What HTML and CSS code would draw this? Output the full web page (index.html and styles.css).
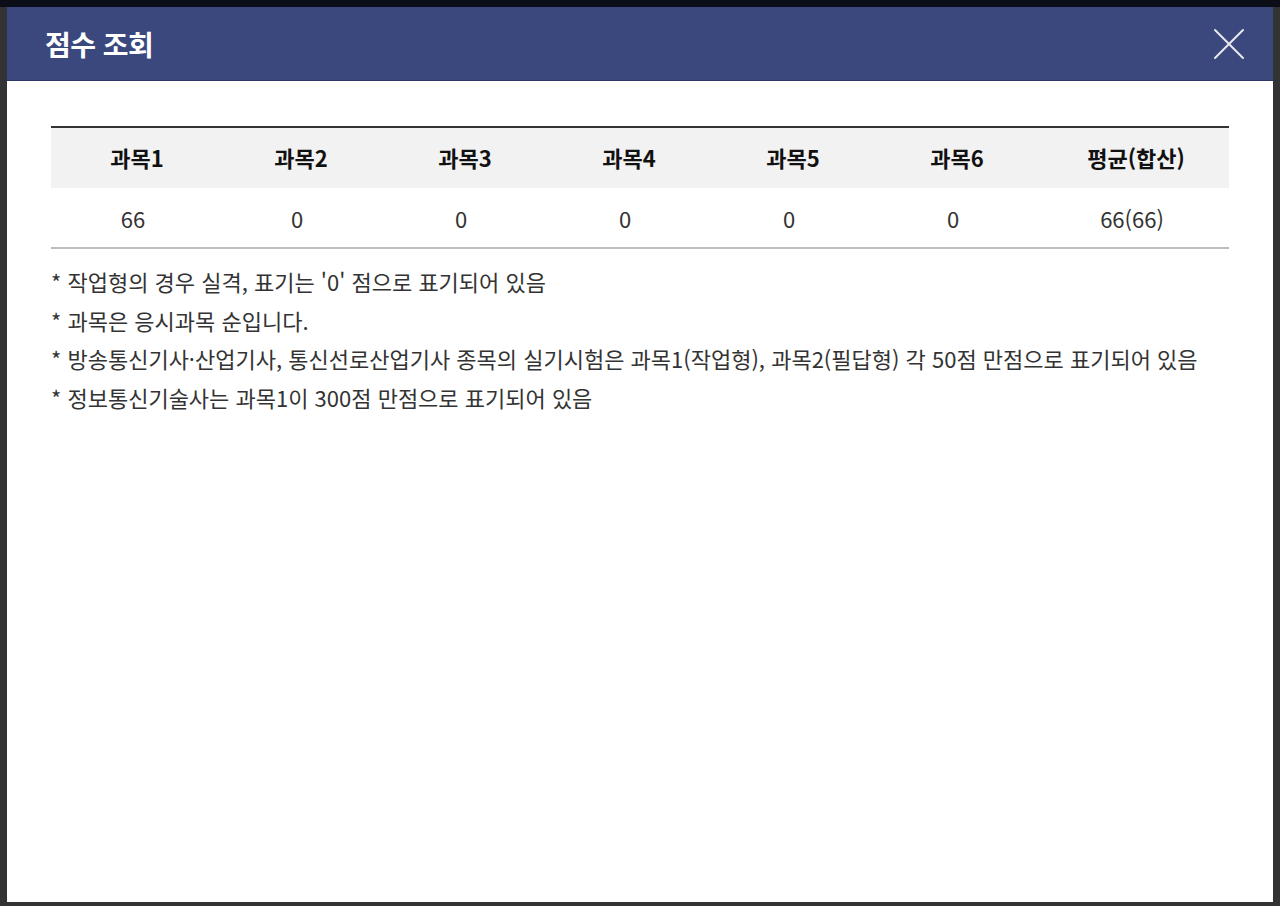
FILE: index.html
```html
<!DOCTYPE html>
<html lang="ko">
<head>
  <meta charset="UTF-8">
  <meta name="viewport" content="width=device-width, initial-scale=1.0">
  <title>점수 조회</title>
  <link rel="stylesheet" href="styles.css">
</head>
<body>
  <div class="dim">
    <div class="score-modal">
      <div class="modal-head">
        <h1 class="modal-title">점수 조회</h1>
        <button class="close-btn" aria-label="닫기">
          <svg width="32" height="32" viewBox="0 0 32 32">
            <path d="M2 2 L30 30 M30 2 L2 30" stroke="#e8e8ee" stroke-width="2" stroke-linecap="round" fill="none"/>
          </svg>
        </button>
      </div>
      <div class="modal-body">
        <table class="score-table">
          <colgroup>
            <col class="col-sub"><col class="col-sub"><col class="col-sub">
            <col class="col-sub"><col class="col-sub"><col class="col-sub">
            <col>
          </colgroup>
          <thead>
            <tr>
              <th>과목1</th>
              <th>과목2</th>
              <th>과목3</th>
              <th>과목4</th>
              <th>과목5</th>
              <th>과목6</th>
              <th>평균(합산)</th>
            </tr>
          </thead>
          <tbody>
            <tr>
              <td>66</td>
              <td>0</td>
              <td>0</td>
              <td>0</td>
              <td>0</td>
              <td>0</td>
              <td>66(66)</td>
            </tr>
          </tbody>
        </table>
        <ul class="notes">
          <li>* 작업형의 경우 실격, 표기는 '0' 점으로 표기되어 있음</li>
          <li>* 과목은 응시과목 순입니다.</li>
          <li>* 방송통신기사·산업기사, 통신선로산업기사 종목의 실기시험은 과목1(작업형), 과목2(필답형) 각 50점 만점으로 표기되어 있음</li>
          <li>* 정보통신기술사는 과목1이 300점 만점으로 표기되어 있음</li>
        </ul>
      </div>
    </div>
  </div>
</body>
</html>
```

FILE: styles.css
```css
* {
  margin: 0;
  padding: 0;
  box-sizing: border-box;
}

body {
  font-family: "Noto Sans CJK KR", "Noto Sans", sans-serif;
  background-color: #333;
  border-top: 7px solid #0b0e19;
}

.dim {
  padding: 0 7px 4px 7px;
  height: 899px;
}

.score-modal {
  background: #fff;
  height: 100%;
  display: flex;
  flex-direction: column;
}

.modal-head {
  background: #3a487d;
  border-bottom: 1px solid #2c3766;
  height: 74px;
  display: flex;
  align-items: center;
  justify-content: space-between;
  padding: 0 28px 0 38px;
}

.modal-title {
  color: #fff;
  font-size: 28px;
  font-weight: 700;
  letter-spacing: -0.5px;
}

.close-btn {
  background: none;
  border: none;
  width: 32px;
  height: 32px;
  cursor: pointer;
}

.modal-body {
  padding: 45px 44px 0 44px;
}

.score-table {
  width: 100%;
  border-collapse: collapse;
  table-layout: fixed;
  border-top: 2px solid #333;
  border-bottom: 2px solid #bdbdbd;
}

.col-sub {
  width: 164px;
}

.score-table th {
  background: #f2f2f2;
  height: 61px;
  padding: 0 0 2px 8px;
  font-size: 22px;
  font-weight: 700;
  color: #111;
}

.score-table td {
  height: 60px;
  text-align: center;
  font-size: 22px;
  color: #333;
}

.notes {
  list-style: none;
  margin-top: 13px;
}

.notes li {
  font-size: 22px;
  line-height: 38.7px;
  color: #333;
}
```
